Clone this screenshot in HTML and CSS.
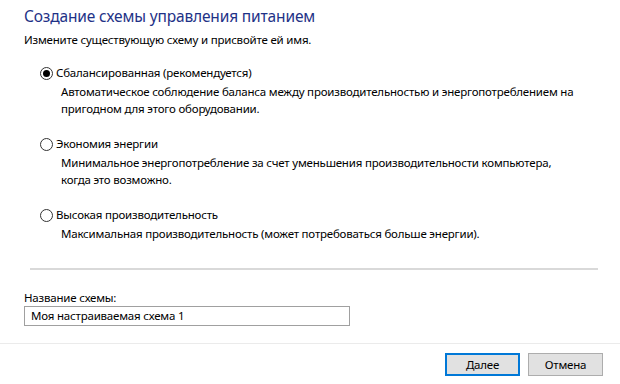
FILE: index.html
```html
<!DOCTYPE html>
<html lang="ru">
<head>
<meta charset="utf-8">
<link rel="stylesheet" href="styles.css">
</head>
<body>
<div class="page">
  <h1 class="title">Создание схемы управления питанием</h1>
  <p class="subtitle">Измените существующую схему и присвойте ей имя.</p>

  <div class="options">
    <div class="option">
      <div class="option-head"><span class="radio checked"></span><span>Сбалансированная (рекомендуется)</span></div>
      <p class="desc">Автоматическое соблюдение баланса между производительностью и энергопотреблением на<br>пригодном для этого оборудовании.</p>
    </div>
    <div class="option">
      <div class="option-head"><span class="radio"></span><span>Экономия энергии</span></div>
      <p class="desc">Минимальное энергопотребление за счет уменьшения производительности компьютера,<br>когда это возможно.</p>
    </div>
    <div class="option">
      <div class="option-head"><span class="radio"></span><span>Высокая производительность</span></div>
      <p class="desc">Максимальная производительность (может потребоваться больше энергии).</p>
    </div>
  </div>

  <div class="sep"></div>

  <div class="name-block">
    <div class="name-label">Название схемы:</div>
    <div class="input">Моя настраиваемая схема 1</div>
  </div>
</div>
<div class="footer">
  <button class="btn primary">Далее</button>
  <button class="btn">Отмена</button>
</div>
</body>
</html>
```

FILE: styles.css
```css
html, body {
  margin: 0;
  padding: 0;
  background: #ffffff;
}
body {
  width: 620px;
  height: 384px;
  overflow: hidden;
  font-family: "Noto Sans", "Open Sans", sans-serif;
  font-size: 11.5px;
  letter-spacing: -0.2px;
  color: #000;
}
.page {
  padding: 4px 22px 0 24px;
  height: 343px;
  box-sizing: border-box;
}
.title {
  margin: 0;
  font-size: 15.5px;
  font-weight: 400;
  letter-spacing: -0.15px;
  line-height: 24px;
  color: #1e3287;
}
.subtitle {
  margin: 4px 0 0 0;
  line-height: 16px;
}
.options {
  display: flex;
  flex-direction: column;
  gap: 19px;
  margin-top: 17px;
  padding-left: 16px;
}
.option-head {
  display: flex;
  align-items: center;
  gap: 3px;
  line-height: 16px;
}
.radio {
  width: 11px;
  height: 11px;
  border: 1px solid #333;
  border-radius: 50%;
  box-sizing: content-box;
  display: flex;
  align-items: center;
  justify-content: center;
  background: #fff;
}
.radio.checked::after {
  content: "";
  width: 7px;
  height: 7px;
  border-radius: 50%;
  background: #000;
}
.desc {
  margin: 3px 0 0 21px;
  line-height: 16.5px;
}
.sep {
  margin: 25px 0 0 6px;
  height: 2px;
  background: #d9d9d9;
  width: 568px;
}
.name-block {
  margin-top: 20px;
}
.name-label {
  line-height: 16px;
}
.input {
  margin-top: 0;
  width: 326px;
  height: 20px;
  box-sizing: border-box;
  border: 1px solid #a0a0a0;
  padding: 0 6px;
  line-height: 18px;
}
.footer {
  border-top: 1px solid #ebebeb;
  display: flex;
  justify-content: flex-end;
  gap: 8px;
  padding: 9px 17px 0 0;
}
.btn {
  width: 75px;
  height: 23px;
  font-family: inherit;
  font-size: 11.5px;
  letter-spacing: -0.2px;
  background: #e1e1e1;
  border: 1px solid #adadad;
  color: #000;
  padding: 0;
}
.btn.primary {
  border: 2px solid #0078d7;
}
```
